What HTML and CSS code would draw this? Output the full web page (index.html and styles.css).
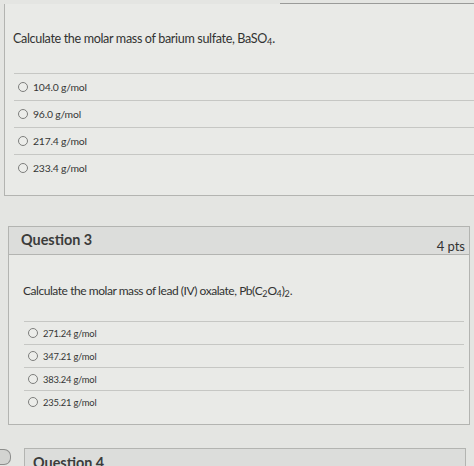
FILE: index.html
```
<!DOCTYPE html>
<html>
<head>
<meta charset="utf-8">
<link rel="stylesheet" href="styles.css">
</head>
<body>
<div class="topline"></div>
<section class="card card1">
  <div class="qtext">Calculate the molar mass of barium sulfate, BaSO<sub>4</sub>.</div>
  <ul class="answers">
    <li><span class="radio"></span>104.0 g/mol</li>
    <li><span class="radio"></span>96.0 g/mol</li>
    <li><span class="radio"></span>217.4 g/mol</li>
    <li><span class="radio"></span>233.4 g/mol</li>
  </ul>
</section>

<section class="card card2">
  <header class="qhead">
    <span class="qtitle">Question 3</span>
    <span class="pts">4 pts</span>
  </header>
  <div class="qbody">
    <div class="qtext">Calculate the molar mass of lead (IV) oxalate, Pb(C<sub>2</sub>O<sub>4</sub>)<sub>2</sub>.</div>
    <ul class="answers small">
      <li><span class="radio"></span>271.24 g/mol</li>
      <li><span class="radio"></span>347.21 g/mol</li>
      <li><span class="radio"></span>383.24 g/mol</li>
      <li><span class="radio"></span>235.21 g/mol</li>
    </ul>
  </div>
</section>

<div class="row4">
  <span class="flag"></span>
  <section class="card card4">
    <header class="qhead head4"><span class="qtitle">Question 4</span></header>
  </section>
</div>
</body>
</html>
```

FILE: styles.css
```
html, body {
  margin: 0;
  padding: 0;
}
body {
  width: 474px;
  height: 466px;
  overflow: hidden;
  background: #e4e5e2;
  font-family: Lato, "Open Sans", sans-serif;
  color: #353635;
}
.topline {
  height: 3px;
  margin-left: 280px;
  border-bottom: 1px solid #9a9b99;
}
.card {
  background: #e9eae7;
  border: 1px solid #b3b4b1;
}
.card1 {
  margin-left: 4px;
  width: 480px;
  border-top: none;
  padding-top: 26px;
  height: 165px;
}
.qtext {
  font-size: 12.6px;
  line-height: 18px;
  padding-left: 8px;
  letter-spacing: -0.35px;
  color: #323332;
}
sub {
  font-size: 9px;
  vertical-align: -2px;
  line-height: 0;
  letter-spacing: 0;
}
.answers {
  list-style: none;
  margin: 25px 0 0 9px;
  padding: 0;
}
.answers li {
  display: flex;
  align-items: center;
  gap: 5px;
  height: 27px;
  border-top: 1px solid #c6c7c4;
  font-size: 10.4px;
  letter-spacing: -0.2px;
  padding-left: 4px;
  box-sizing: border-box;
}
.radio {
  width: 8px;
  height: 8px;
  border: 1px solid #7d7e7c;
  border-radius: 50%;
  background: #ecedea;
  flex: none;
}
.card2 {
  margin: 30px 0 0 8px;
  width: 460px;
}
.qhead {
  display: flex;
  justify-content: space-between;
  align-items: flex-end;
  background: #dcdddb;
  border-bottom: 1px solid #b3b4b1;
  height: 27px;
  padding: 0 0 0 12px;
}
.qtitle {
  font-size: 14.4px;
  font-weight: bold;
  color: #3b3c3b;
  align-self: center;
  margin-top: -2px;
}
.pts {
  font-size: 13px;
  color: #333;
  margin-right: 4px;
  margin-bottom: 0;
}
.qbody {
  padding: 27px 5px 0 6px;
  height: 142px;
}
.qbody .qtext {
  padding-left: 8px;
  font-size: 12px;
  letter-spacing: -0.45px;
}
.answers.small {
  margin: 21px 0 0 9px;
}
.answers.small li {
  height: 23px;
  font-size: 9.4px;
  letter-spacing: -0.2px;
  padding-left: 4px;
}
.row4 {
  display: flex;
  align-items: flex-start;
  margin-top: 23px;
}
.flag {
  width: 10px;
  height: 14px;
  margin-top: 1px;
  border: 1px solid #8d8e8c;
  border-left: none;
  border-radius: 0 7px 7px 0;
  background: #d3d4d1;
  flex: none;
}
.card4 {
  margin-left: 13px;
  width: 440px;
  height: 40px;
}
.head4 {
  padding-left: 8px;
  height: 30px;
  align-items: flex-start;
}
.head4 .qtitle {
  align-self: flex-start;
  margin-top: 5px;
}
```
